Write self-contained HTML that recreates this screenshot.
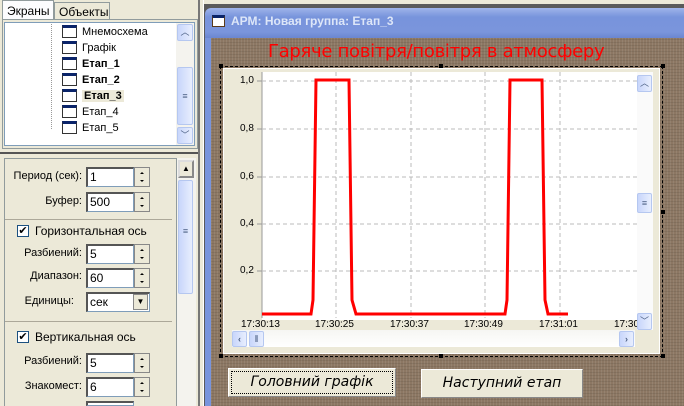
<!DOCTYPE html>
<html><head><meta charset="utf-8"><style>
*{margin:0;padding:0;box-sizing:border-box}
html,body{width:684px;height:406px;overflow:hidden}
body{background:#ece9d8;font-family:"Liberation Sans",sans-serif;font-size:11px;position:relative}
.a{position:absolute}
.lbl{position:absolute;font-size:11px;color:#000;text-align:right;white-space:nowrap}
.inp{position:absolute;background:#fff;border:1px solid #7f9db9;border-top:2px solid #555;border-left:2px solid #555;font-size:12px;padding-left:2px;line-height:16px;overflow:hidden}
.spin{position:absolute;width:16px;height:20px;background:#ece9d8;border:1px solid #888}
.spin:before,.spin:after{content:"";position:absolute;left:5px;border-left:2px solid transparent;border-right:2px solid transparent}
.spin:before{top:4px;border-bottom:2px solid #000}
.spin:after{top:12px;border-top:2px solid #000}
.xl{position:absolute;top:319px;font-size:10px}
.yl{position:absolute;left:240px;font-size:10px}
.sb{background:linear-gradient(90deg,#c8d6fb,#e8eefe);border:1px solid #b5c7f0;border-radius:2px;color:#4d6185;font-size:9px;text-align:center;line-height:14px}
.ti{position:absolute;left:0;top:1px;width:15px;height:13px;border:1px solid #333;border-top:3px solid #0a246a;background:#fff}
.tr div{position:relative;padding-left:20px;height:16px;white-space:nowrap}
.btn{font-style:italic;font-size:14px;font-family:"DejaVu Sans","Liberation Sans",sans-serif}
</style></head><body>
<div class="a" style="left:2px;top:0;width:52px;height:19px;border:1px solid #919b9c;border-bottom:none;background:#fcfcfe;padding:3px 0 0 4px;font-size:12px">Экраны</div>
<div class="a" style="left:54px;top:2px;width:56px;height:17px;border:1px solid #919b9c;border-bottom:none;padding:2px 0 0 4px;font-size:12px">Объекты</div>
<div class="a" style="left:2px;top:19px;width:196px;height:130px;border:1px solid #919b9c"></div>
<div class="a" style="left:4px;top:22px;width:191px;height:124px;background:#fff;border:1px solid #7f9db9"></div>
<div class="a" style="left:51px;top:24px;height:105px;border-left:1px dotted #999"></div>
<div class="a tr" style="left:62px;top:24px;font-size:11px;line-height:16px">
<div><span class="ti"></span>Мнемосхема</div>
<div><span class="ti"></span>Графік</div>
<div style="font-weight:bold"><span class="ti"></span>Етап_1</div>
<div style="font-weight:bold"><span class="ti"></span>Етап_2</div>
<div style="font-weight:bold"><span class="ti"></span><span style="background:#ece9d8;padding:0 2px">Етап_3</span></div>
<div><span class="ti"></span>Етап_4</div>
<div><span class="ti"></span>Етап_5</div>
</div>
<div class="a" style="left:176px;top:23px;width:18px;height:122px;background:#f4f3ee"></div>
<div class="a sb" style="left:177px;top:24px;width:16px;height:17px">︿</div>
<div class="a sb" style="left:177px;top:67px;width:16px;height:58px;line-height:56px">≡</div>
<div class="a sb" style="left:177px;top:127px;width:16px;height:17px">﹀</div>
<div class="a" style="left:0;top:152px;width:199px;height:254px;border-top:2px solid #555"></div>
<div class="a" style="left:4px;top:158px;width:174px;height:250px;border:1px solid #919b9c;border-right:none"></div>
<div class="a" style="left:176px;top:158px;width:20px;height:250px;background:#f4f3ee;border-left:1px solid #919b9c"></div>
<div class="a" style="left:178px;top:160px;width:16px;height:18px;border:2px outset #ddd;background:#ece9d8;font-size:8px;text-align:center;line-height:13px">▲</div>
<div class="a sb" style="left:178px;top:180px;width:15px;height:114px;line-height:100px">≡</div>
<div class="lbl" style="left:2px;top:170px;width:80px">Период (сек):</div>
<div class="inp" style="left:86px;top:167px;width:48px;height:20px">1</div><div class="spin" style="left:134px;top:167px"></div>
<div class="lbl" style="left:10px;top:195px;width:72px">Буфер:</div>
<div class="inp" style="left:86px;top:192px;width:48px;height:20px">500</div><div class="spin" style="left:134px;top:192px"></div>
<div class="a" style="left:5px;top:219px;width:167px;border-top:1px solid #aca899"></div>
<div class="a" style="left:17px;top:225px;width:12px;height:12px;border:1px solid #1c5180;background:#fff;font-size:11px;line-height:10px;text-align:center">✔</div>
<div class="a" style="left:35px;top:224px;font-size:12px">Горизонтальная ось</div>
<div class="lbl" style="left:4px;top:247px;width:78px">Разбиений:</div>
<div class="inp" style="left:86px;top:244px;width:48px;height:20px">5</div><div class="spin" style="left:134px;top:244px"></div>
<div class="lbl" style="left:4px;top:270px;width:78px">Диапазон:</div>
<div class="inp" style="left:86px;top:268px;width:48px;height:20px">60</div><div class="spin" style="left:134px;top:268px"></div>
<div class="lbl" style="left:4px;top:295px;width:70px">Единицы:</div>
<div class="inp" style="left:86px;top:292px;width:64px;height:20px">сек</div>
<div class="a" style="left:133px;top:294px;width:15px;height:16px;background:#ece9d8;border:1px solid #888;text-align:center;font-size:8px;line-height:14px">▼</div>
<div class="a" style="left:5px;top:321px;width:167px;border-top:1px solid #aca899"></div>
<div class="a" style="left:17px;top:331px;width:12px;height:12px;border:1px solid #1c5180;background:#fff;font-size:11px;line-height:10px;text-align:center">✔</div>
<div class="a" style="left:35px;top:330px;font-size:12px">Вертикальная ось</div>
<div class="lbl" style="left:4px;top:355px;width:78px">Разбиений:</div>
<div class="inp" style="left:86px;top:353px;width:48px;height:20px">5</div><div class="spin" style="left:134px;top:353px"></div>
<div class="lbl" style="left:4px;top:380px;width:78px">Знакомест:</div>
<div class="inp" style="left:86px;top:377px;width:48px;height:20px">6</div><div class="spin" style="left:134px;top:377px"></div>
<div class="inp" style="left:86px;top:401px;width:48px;height:5px"></div>
<div class="a" style="left:198px;top:0;width:6px;height:406px;background:#ece9d8;border-left:2px solid #777;border-right:1px solid #fff"></div>
<div class="a" style="left:204px;top:4px;width:480px;height:402px;background:#5a5a5a"></div>
<div class="a" style="left:205px;top:8px;width:479px;height:30px;background:linear-gradient(#9fb4ea,#7894dc 30%,#7a95dc 80%,#6a86d0);border-radius:6px 0 0 0"></div>
<div class="a" style="left:212px;top:15px;width:13px;height:12px;border:1px solid #5a3a1a;border-top:3px solid #0a246a;background:#fff"></div>
<div class="a" style="left:231px;top:14px;color:#dde6f8;font-weight:bold;font-size:12px">АРМ: Новая группа: Етап_3</div>
<div class="a" style="left:205px;top:38px;width:6px;height:368px;background:#7894dc"></div>
<div class="a" style="left:211px;top:38px;width:473px;height:368px;background:#8c7763;background-image:repeating-linear-gradient(0deg,rgba(0,0,0,.08) 0 1px,transparent 1px 3px),repeating-linear-gradient(90deg,rgba(255,255,255,.08) 0 1px,transparent 1px 3px)"></div>
<div class="a" style="left:268px;top:41px;width:332px;color:#f00;font-size:18px;font-family:'DejaVu Sans',sans-serif;white-space:nowrap;letter-spacing:-.3px">Гаряче повітря/повітря в атмосферу</div>
<div class="a" style="left:220px;top:66px;width:443px;height:291px;border:1px dashed #000"></div>
<div class="a" style="left:219px;top:64px;width:4px;height:4px;background:#000"></div>
<div class="a" style="left:439px;top:64px;width:4px;height:4px;background:#000"></div>
<div class="a" style="left:661px;top:64px;width:4px;height:4px;background:#000"></div>
<div class="a" style="left:219px;top:354px;width:4px;height:4px;background:#000"></div>
<div class="a" style="left:439px;top:354px;width:4px;height:4px;background:#000"></div>
<div class="a" style="left:661px;top:354px;width:4px;height:4px;background:#000"></div>
<div class="a" style="left:661px;top:210px;width:4px;height:4px;background:#000"></div>
<div class="a" style="left:223px;top:68px;width:437px;height:286px;background:#ece9d8;border:1px solid #fff"></div>
<svg class="a" style="left:0;top:0" width="684" height="406">
<rect x="262" y="72" width="375" height="248" fill="#fff"/>
<line x1="262" y1="72" x2="262" y2="318" stroke="#999"/>
<g stroke="#bbb" stroke-dasharray="4,3">
<line x1="262" y1="81" x2="637" y2="81"/><line x1="262" y1="129" x2="637" y2="129"/><line x1="262" y1="177" x2="637" y2="177"/><line x1="262" y1="224" x2="637" y2="224"/><line x1="262" y1="271" x2="637" y2="271"/>
<line x1="336" y1="72" x2="336" y2="318"/><line x1="411" y1="72" x2="411" y2="318"/><line x1="485" y1="72" x2="485" y2="318"/><line x1="560" y1="72" x2="560" y2="318"/>
</g>
<g stroke="#999"><line x1="257" y1="81" x2="262" y2="81"/><line x1="257" y1="129" x2="262" y2="129"/><line x1="257" y1="177" x2="262" y2="177"/><line x1="257" y1="224" x2="262" y2="224"/><line x1="257" y1="271" x2="262" y2="271"/></g>
<polyline fill="none" stroke="#f00" stroke-width="3" points="262,314 311,314 313,300 316,80 349,80 352,300 356,314 505,314 507,300 510,80 542,80 545,300 548,314 568,314"/>
</svg>
<div class="yl" style="top:75px">1,0</div><div class="yl" style="top:123px">0,8</div><div class="yl" style="top:171px">0,6</div><div class="yl" style="top:218px">0,4</div><div class="yl" style="top:265px">0,2</div>
<div class="xl" style="left:241px">17:30:13</div><div class="xl" style="left:315px">17:30:25</div><div class="xl" style="left:390px">17:30:37</div><div class="xl" style="left:464px">17:30:49</div><div class="xl" style="left:539px">17:31:01</div><div class="xl" style="left:614px;width:23px;overflow:hidden;white-space:nowrap">17:30</div>
<div class="a" style="left:637px;top:72px;width:16px;height:258px;background:#fafafa"></div>
<div class="a sb" style="left:637px;top:75px;width:15px;height:17px">︿</div>
<div class="a sb" style="left:637px;top:193px;width:15px;height:20px;line-height:18px">≡</div>
<div class="a sb" style="left:637px;top:313px;width:15px;height:17px">﹀</div>
<div class="a" style="left:232px;top:330px;width:403px;height:17px;background:linear-gradient(#f6f6f3,#fff)"></div>
<div class="a sb" style="left:232px;top:331px;width:15px;height:16px;font-weight:bold">‹</div>
<div class="a sb" style="left:249px;top:331px;width:15px;height:16px">⦀</div>
<div class="a sb" style="left:619px;top:331px;width:15px;height:16px;font-weight:bold">›</div>
<div class="a" style="left:228px;top:368px;width:168px;height:29px;background:#ece9d8;border:1px solid #fff;border-right-color:#888;border-bottom-color:#888"></div>
<div class="a" style="left:231px;top:371px;width:162px;height:23px;border:1px dotted #000"></div>
<div class="a btn" style="left:228px;top:374px;width:168px;text-align:center">Головний графік</div>
<div class="a" style="left:421px;top:369px;width:162px;height:29px;background:#ece9d8;border:1px solid #fff;border-right-color:#888;border-bottom-color:#888"></div>
<div class="a btn" style="left:421px;top:375px;width:162px;text-align:center">Наступний етап</div>
</body></html>
